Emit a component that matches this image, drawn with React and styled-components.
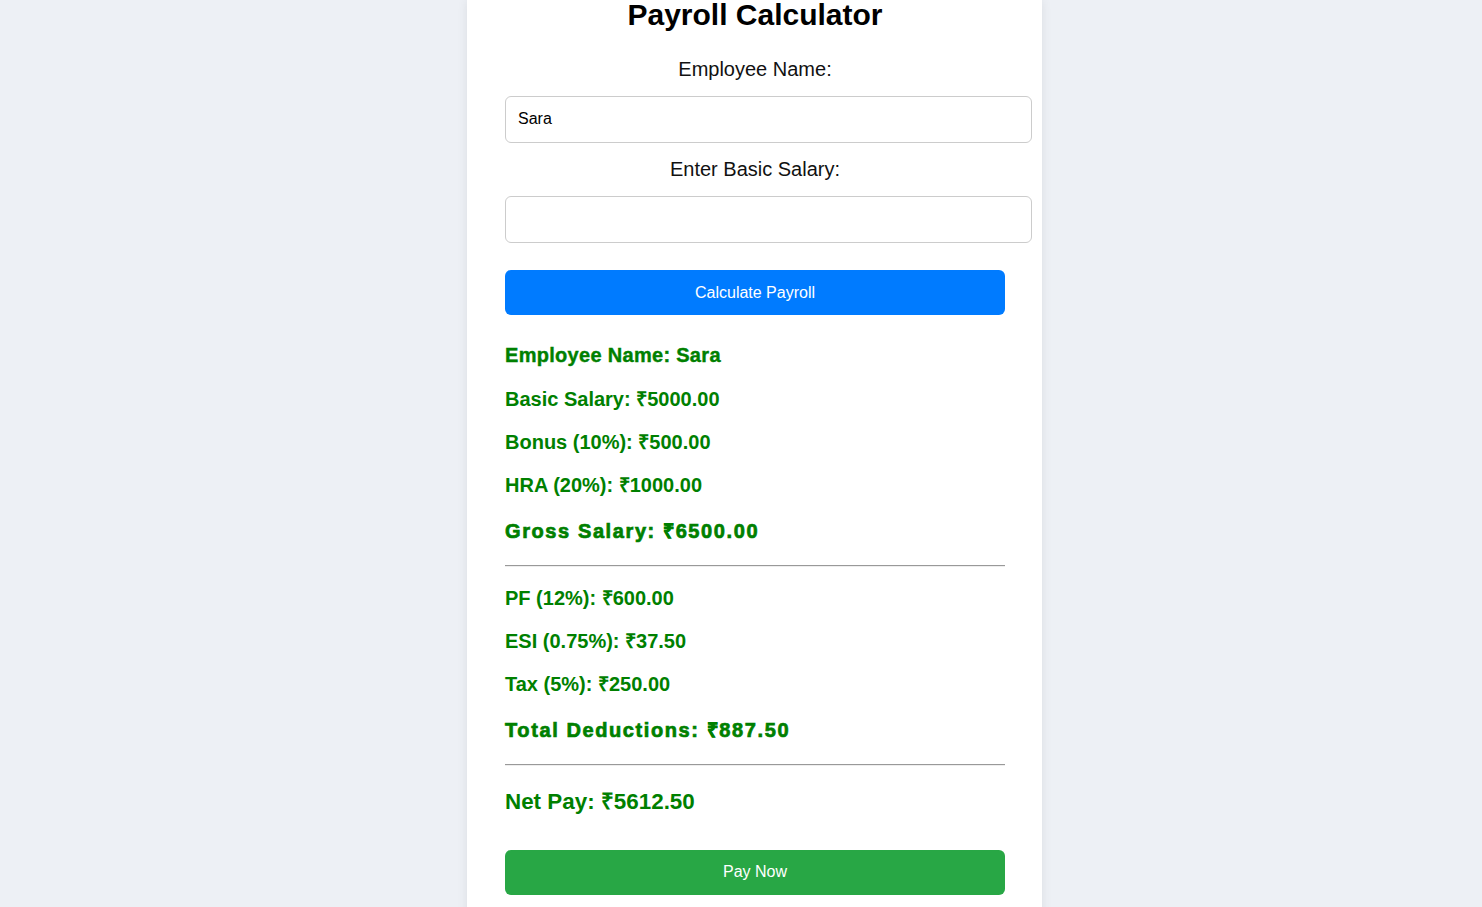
import React, { useState } from "react";
import styled, { createGlobalStyle } from "styled-components";

const GlobalStyle = createGlobalStyle`
  body {
    margin: 0;
    background-color: #edf0f5;
    font-family: "Liberation Sans", Arial, sans-serif;
  }
`;

const BASIC = 5000;

function App() {
  const [name, setName] = useState("Sara");
  const [salary, setSalary] = useState("");

  const bonus = BASIC * 0.1;
  const hra = BASIC * 0.2;
  const gross = BASIC + bonus + hra;
  const pf = BASIC * 0.12;
  const esi = BASIC * 0.0075;
  const tax = BASIC * 0.05;
  const deductions = pf + esi + tax;
  const net = gross - deductions;
  const rs = (v) => "₹" + v.toFixed(2);

  return (
    <>
      <GlobalStyle />
      <Page>
        <Card>
          <Title>Payroll Calculator</Title>
          <Label>Employee Name:</Label>
          <Input type="text" value={name} onChange={(e) => setName(e.target.value)} />
          <Label $top="14.5px">Enter Basic Salary:</Label>
          <Input type="number" value={salary} onChange={(e) => setSalary(e.target.value)} />
          <Button $color="#007bff" $top="27px">Calculate Payroll</Button>

          <Results>
            <Line $kind="name" $top="28.5px">Employee Name: {name}</Line>
            <Line $top="21px">Basic Salary: {rs(BASIC)}</Line>
            <Line>Bonus (10%): {rs(bonus)}</Line>
            <Line>HRA (20%): {rs(hra)}</Line>
            <Line $kind="total" $top="23px">Gross Salary: {rs(gross)}</Line>
            <Divider />
            <Line $top="20px">PF (12%): {rs(pf)}</Line>
            <Line>ESI (0.75%): {rs(esi)}</Line>
            <Line>Tax (5%): {rs(tax)}</Line>
            <Line $kind="total" $top="23px">Total Deductions: {rs(deductions)}</Line>
            <Divider />
            <Line $kind="net" $top="23px">Net Pay: {rs(net)}</Line>
          </Results>

          <Button $color="#28a745" $top="35px">Pay Now</Button>
        </Card>
      </Page>
    </>
  );
}

export default App;

const Page = styled.div`
  display: flex;
  justify-content: center;
  padding-left: 27px;
  min-height: 907px;
`;

const Card = styled.div`
  width: 500px;
  padding: 0 37px 40px 38px;
  background-color: #ffffff;
  box-shadow: 0 0 10px rgba(0, 0, 0, 0.08);
  display: flex;
  flex-direction: column;
  align-items: flex-start;
`;

const Title = styled.h1`
  align-self: stretch;
  margin: 0;
  font-size: 30px;
  line-height: 30px;
  font-weight: bold;
  text-align: center;
  color: #000;
`;

const Label = styled.label`
  align-self: stretch;
  margin-top: ${(p) => p.$top || "27.5px"};
  margin-bottom: 15.5px;
  font-size: 20px;
  line-height: 23px;
  text-align: center;
  color: #111;
`;

const Input = styled.input`
  box-sizing: border-box;
  width: 527px;
  height: 47px;
  padding: 0 12px 2px;
  border: 1px solid #ccc;
  border-radius: 6px;
  font-family: "Liberation Sans", Arial, sans-serif;
  font-size: 16px;
  color: #000;
  outline: none;
`;

const Button = styled.button`
  width: 500px;
  height: 45px;
  margin-top: ${(p) => p.$top};
  border: none;
  border-radius: 6px;
  background-color: ${(p) => p.$color};
  color: #fff;
  font-family: "Liberation Sans", Arial, sans-serif;
  font-size: 16px;
  cursor: pointer;
`;

const Results = styled.div`
  width: 500px;
  display: flex;
  flex-direction: column;
`;

const Line = styled.p`
  margin: ${(p) => p.$top || "20px"} 0 0;
  color: #008000;
  font-weight: bold;
  font-size: ${(p) => (p.$kind === "net" ? "22.4px" : "20px")};
  line-height: ${(p) => (p.$kind === "net" ? "26px" : "23px")};
  letter-spacing: ${(p) =>
    p.$kind === "total" ? "1.6px" : p.$kind === "name" ? "0.3px" : "0"};
  -webkit-text-stroke: ${(p) =>
    p.$kind === "total" ? "0.7px #008000" : p.$kind === "name" ? "0.4px #008000" : "0"};
`;

const Divider = styled.hr`
  width: 500px;
  margin: 22px 0 0;
  border: none;
  border-top: 1px solid #999;
  border-bottom: 1px solid #eee;
`;
